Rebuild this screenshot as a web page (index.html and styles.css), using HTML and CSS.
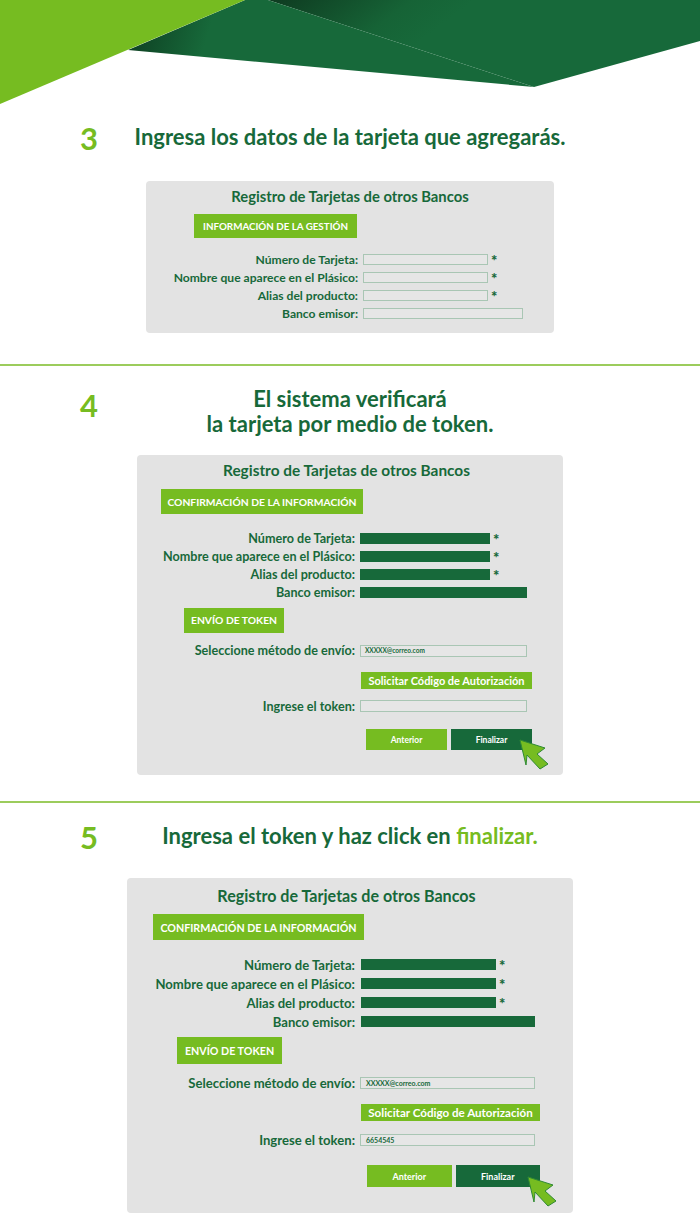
FILE: index.html
```html
<!DOCTYPE html>
<html lang="es">
<head>
<meta charset="utf-8">
<title>Registro de Tarjetas</title>
<link rel="stylesheet" href="styles.css">
</head>
<body>
<svg class="hero" viewBox="0 0 700 105" aria-hidden="true">
  <defs>
    <linearGradient id="shadeRight" gradientUnits="userSpaceOnUse" x1="300" y1="-25" x2="375" y2="75">
      <stop offset="0" stop-color="#0e3a20"/>
      <stop offset="0.7" stop-color="#166336"/>
      <stop offset="1" stop-color="#17693a"/>
    </linearGradient>
    <linearGradient id="shadeLeft" gradientUnits="userSpaceOnUse" x1="135" y1="40" x2="200" y2="60">
      <stop offset="0" stop-color="#0f4425"/>
      <stop offset="1" stop-color="#17693a"/>
    </linearGradient>
  </defs>
  <polygon points="268,0 700,0 700,41 534,87" fill="url(#shadeRight)"/>
  <polygon points="128,50 245,0 268,0 534,87" fill="url(#shadeLeft)"/>
  <polygon points="0,0 245,0 0,104" fill="#76bc21"/>
</svg>

<section class="step step-3">
  <div class="step-head">
    <span class="step-num">3</span>
    <h2 class="step-title">Ingresa los datos de la tarjeta que agregarás.</h2>
  </div>
  <div class="card card-a">
    <h3 class="card-title">Registro de Tarjetas de otros Bancos</h3>
    <div class="badge badge-main">INFORMACIÓN DE LA GESTIÓN</div>
    <div class="rows">
      <div class="row"><span class="label">Número de Tarjeta:</span><span class="field short"></span><span class="req">*</span></div>
      <div class="row"><span class="label">Nombre que aparece en el Plásico:</span><span class="field short"></span><span class="req">*</span></div>
      <div class="row"><span class="label">Alias del producto:</span><span class="field short"></span><span class="req">*</span></div>
      <div class="row"><span class="label">Banco emisor:</span><span class="field long"></span></div>
    </div>
  </div>
</section>

<section class="step step-4">
  <div class="step-head">
    <span class="step-num">4</span>
    <h2 class="step-title">El sistema verificará<br>la tarjeta por medio de token.</h2>
  </div>
  <div class="card card-b">
    <h3 class="card-title">Registro de Tarjetas de otros Bancos</h3>
    <div class="badge badge-main">CONFIRMACIÓN DE LA INFORMACIÓN</div>
    <div class="rows">
      <div class="row"><span class="label">Número de Tarjeta:</span><span class="bar short"></span><span class="req">*</span></div>
      <div class="row"><span class="label">Nombre que aparece en el Plásico:</span><span class="bar short"></span><span class="req">*</span></div>
      <div class="row"><span class="label">Alias del producto:</span><span class="bar short"></span><span class="req">*</span></div>
      <div class="row"><span class="label">Banco emisor:</span><span class="bar long"></span></div>
    </div>
    <div class="badge badge-token">ENVÍO DE TOKEN</div>
    <div class="row row-method"><span class="label">Seleccione método de envío:</span><span class="field long value">XXXXX@correo.com</span></div>
    <div class="request">Solicitar Código de Autorización</div>
    <div class="row row-token"><span class="label">Ingrese el token:</span><span class="field long value"></span></div>
    <div class="actions">
      <span class="btn btn-prev">Anterior</span>
      <span class="btn btn-next">Finalizar
        <svg class="cursor" viewBox="0 0 30 31" aria-hidden="true"><path d="M1 1 L26 9 L18 15 L29 25 L21 30 L8 16 L7 26 Z" fill="#76bc21" stroke="#2f8a33" stroke-width="1" stroke-linejoin="round"/></svg>
      </span>
    </div>
  </div>
</section>

<section class="step step-5">
  <div class="step-head">
    <span class="step-num">5</span>
    <h2 class="step-title">Ingresa el token y haz click en <em class="accent">finalizar.</em></h2>
  </div>
  <div class="card card-c">
    <h3 class="card-title">Registro de Tarjetas de otros Bancos</h3>
    <div class="badge badge-main">CONFIRMACIÓN DE LA INFORMACIÓN</div>
    <div class="rows">
      <div class="row"><span class="label">Número de Tarjeta:</span><span class="bar short"></span><span class="req">*</span></div>
      <div class="row"><span class="label">Nombre que aparece en el Plásico:</span><span class="bar short"></span><span class="req">*</span></div>
      <div class="row"><span class="label">Alias del producto:</span><span class="bar short"></span><span class="req">*</span></div>
      <div class="row"><span class="label">Banco emisor:</span><span class="bar long"></span></div>
    </div>
    <div class="badge badge-token">ENVÍO DE TOKEN</div>
    <div class="row row-method"><span class="label">Seleccione método de envío:</span><span class="field long value">XXXXX@correo.com</span></div>
    <div class="request">Solicitar Código de Autorización</div>
    <div class="row row-token"><span class="label">Ingrese el token:</span><span class="field long value">6654545</span></div>
    <div class="actions">
      <span class="btn btn-prev">Anterior</span>
      <span class="btn btn-next">Finalizar
        <svg class="cursor" viewBox="0 0 30 31" aria-hidden="true"><path d="M1 1 L26 9 L18 15 L29 25 L21 30 L8 16 L7 26 Z" fill="#76bc21" stroke="#2f8a33" stroke-width="1" stroke-linejoin="round"/></svg>
      </span>
    </div>
  </div>
</section>
</body>
</html>
```

FILE: styles.css
```css
* { box-sizing: border-box; }
html, body { margin: 0; padding: 0; background: #fff; }
body {
  width: 700px;
  height: 1213px;
  overflow: hidden;
  font-family: Lato, "Open Sans", sans-serif;
  color: #17693a;
}
.hero { display: block; width: 700px; height: 105px; }

.step { border-bottom: 2px solid #9ccc5c; }
.step-3 { height: 261px; padding-top: 19px; }
.step-4 { height: 437px; padding-top: 20px; }
.step-5 { height: 410px; padding-top: 20px; border-bottom: 0; }

.step-head {
  display: grid;
  grid-template-columns: 1fr auto 1fr;
  align-items: start;
}
.step-num {
  margin-top: -2px;
  padding-left: 80px;
  font-size: 31px;
  line-height: 32px;
  font-weight: 700;
  color: #76bc21;
}
.step-4 .step-num { margin-top: 3px; }
.step-title {
  margin: 0;
  font-size: 22px;
  line-height: 25px;
  font-weight: 700;
  text-align: center;
  color: #17693a;
}
.step-3 .step-head { height: 32px; }
.step-5 .step-head { height: 32px; }
.accent { font-style: normal; color: #76bc21; }

.card {
  margin: 0 auto;
  background: #e3e3e3;
  border-radius: 4px;
  font-weight: 700;
}
.card-title {
  margin: 0;
  font-weight: 700;
  text-align: center;
  color: #17693a;
}
.badge {
  display: flex;
  align-items: center;
  justify-content: center;
  background: #76bc21;
  color: #fff;
  font-weight: 700;
  white-space: nowrap;
}
.row { display: flex; align-items: center; }
.label {
  flex: none;
  text-align: right;
  white-space: nowrap;
  color: #17693a;
}
.field, .bar { display: block; flex: none; }
.field {
  border: 1px solid #a9c6b4;
  background: #e6e6e6;
  font-size: 6.5px;
  line-height: 10px;
  padding-left: 4px;
  color: #17693a;
}
.bar { background: #17693a; }
.req { margin: -2px 0 0 3px; font-size: 15px; line-height: 15px; height: 11px; font-weight: 900; color: #17693a; }

.request {
  display: flex;
  align-items: center;
  justify-content: center;
  background: #76bc21;
  color: #fff;
  white-space: nowrap;
}
.actions { display: flex; }
.btn {
  position: relative;
  display: flex;
  align-items: center;
  justify-content: center;
  color: #fff;
}
.btn-prev { background: #76bc21; }
.btn-next { background: #17693a; }
.cursor { position: absolute; display: block; }

/* Card A: step 3 */
.card-a { width: 408px; height: 152px; margin-top: 25px; padding-top: 6px; }
.card-a .card-title { font-size: 14.8px; line-height: 18px; }
.card-a .badge-main { width: 163px; height: 24px; margin: 9px 0 0 48px; font-size: 9.8px; }
.card-a .rows { margin-top: 13px; }
.card-a .row { height: 17.8px; }
.card-a .label { width: 212px; font-size: 12.1px; }
.card-a .field { height: 11px; margin-left: 5px; }
.card-a .short { width: 125px; }
.card-a .long { width: 160px; }

/* Card B: step 4 */
.card-b { width: 426px; height: 320px; margin-top: 19px; padding-top: 6px; }
.card-b .card-title { font-size: 15.4px; line-height: 18px; padding-right: 7px; }
.card-b .badge-main { width: 202px; height: 25px; margin: 10px 0 0 24px; font-size: 10.3px; }
.card-b .rows { margin-top: 15px; }
.card-b .row { height: 18.2px; }
.card-b .label { width: 218px; font-size: 12.6px; }
.card-b .bar, .card-b .field { height: 11px; margin-left: 5px; }
.card-b .short { width: 130px; }
.card-b .long { width: 167px; }
.card-b .badge-token { width: 100px; height: 25px; margin: 6px 0 0 47px; font-size: 10.3px; }
.card-b .row-method { margin-top: 9px; }
.card-b .row-method .field, .card-b .row-token .field { height: 12px; }
.card-b .request { width: 171px; height: 17px; margin: 12px 0 0 224px; font-size: 11px; }
.card-b .row-token { margin-top: 8px; }
.card-b .actions { gap: 4px; margin: 14px 0 0 229px; }
.card-b .btn { width: 81px; height: 21px; font-size: 8.5px; }
.card-b .cursor { left: 68px; top: 10px; width: 30px; height: 31px; }

/* Card C: step 5 */
.card-c { width: 446px; height: 335px; margin-top: 23px; padding-top: 8px; }
.card-c .card-title { font-size: 16.1px; line-height: 19px; padding-right: 7px; }
.card-c .badge-main { width: 211px; height: 26px; margin: 9px 0 0 26px; font-size: 10.7px; }
.card-c .rows { margin-top: 15px; }
.card-c .row { height: 19px; }
.card-c .label { width: 228px; font-size: 13.1px; }
.card-c .bar, .card-c .field { height: 11px; margin-left: 6px; }
.card-c .short { width: 135px; }
.card-c .long { width: 174px; }
.card-c .badge-token { width: 105px; height: 27px; margin: 6px 0 0 50px; font-size: 10.7px; }
.card-c .row-method { margin-top: 9px; }
.card-c .row-method .field, .card-c .row-token .field { width: 175px; height: 12px; margin-left: 5px; font-size: 7px; padding-left: 5px; }
.card-c .request { width: 179px; height: 17px; margin: 12px 0 0 234px; font-size: 11.6px; }
.card-c .row-token { margin-top: 9px; }
.card-c .actions { gap: 4px; margin: 16px 0 0 240px; }
.card-c .btn { width: 84.5px; height: 22px; font-size: 9px; }
.card-c .cursor { left: 71px; top: 11px; width: 30px; height: 31px; }
```
